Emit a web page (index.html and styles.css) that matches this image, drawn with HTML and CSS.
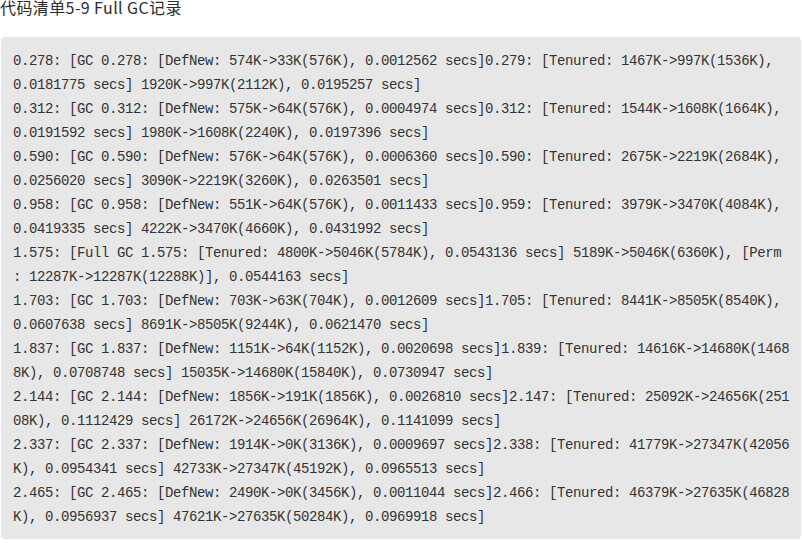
FILE: index.html
```html
<!DOCTYPE html>
<html lang="zh-CN">
<head>
<meta charset="utf-8">
<title>代码清单5-9 Full GC记录</title>
<link rel="stylesheet" href="styles.css">
</head>
<body>
<div class="listing">
<p class="listing-title">代码清单5-9 Full GC记录</p>
<pre class="code">0.278: [GC 0.278: [DefNew: 574K-&gt;33K(576K), 0.0012562 secs]0.279: [Tenured: 1467K-&gt;997K(1536K), 0.0181775 secs] 1920K-&gt;997K(2112K), 0.0195257 secs]
0.312: [GC 0.312: [DefNew: 575K-&gt;64K(576K), 0.0004974 secs]0.312: [Tenured: 1544K-&gt;1608K(1664K), 0.0191592 secs] 1980K-&gt;1608K(2240K), 0.0197396 secs]
0.590: [GC 0.590: [DefNew: 576K-&gt;64K(576K), 0.0006360 secs]0.590: [Tenured: 2675K-&gt;2219K(2684K), 0.0256020 secs] 3090K-&gt;2219K(3260K), 0.0263501 secs]
0.958: [GC 0.958: [DefNew: 551K-&gt;64K(576K), 0.0011433 secs]0.959: [Tenured: 3979K-&gt;3470K(4084K), 0.0419335 secs] 4222K-&gt;3470K(4660K), 0.0431992 secs]
1.575: [Full GC 1.575: [Tenured: 4800K-&gt;5046K(5784K), 0.0543136 secs] 5189K-&gt;5046K(6360K), [Perm : 12287K-&gt;12287K(12288K)], 0.0544163 secs]
1.703: [GC 1.703: [DefNew: 703K-&gt;63K(704K), 0.0012609 secs]1.705: [Tenured: 8441K-&gt;8505K(8540K), 0.0607638 secs] 8691K-&gt;8505K(9244K), 0.0621470 secs]
1.837: [GC 1.837: [DefNew: 1151K-&gt;64K(1152K), 0.0020698 secs]1.839: [Tenured: 14616K-&gt;14680K(14688K), 0.0708748 secs] 15035K-&gt;14680K(15840K), 0.0730947 secs]
2.144: [GC 2.144: [DefNew: 1856K-&gt;191K(1856K), 0.0026810 secs]2.147: [Tenured: 25092K-&gt;24656K(25108K), 0.1112429 secs] 26172K-&gt;24656K(26964K), 0.1141099 secs]
2.337: [GC 2.337: [DefNew: 1914K-&gt;0K(3136K), 0.0009697 secs]2.338: [Tenured: 41779K-&gt;27347K(42056K), 0.0954341 secs] 42733K-&gt;27347K(45192K), 0.0965513 secs]
2.465: [GC 2.465: [DefNew: 2490K-&gt;0K(3456K), 0.0011044 secs]2.466: [Tenured: 46379K-&gt;27635K(46828K), 0.0956937 secs] 47621K-&gt;27635K(50284K), 0.0969918 secs]</pre>
</div>
</body>
</html>
```

FILE: styles.css
```css
html, body {
  margin: 0;
  padding: 0;
  background: #ffffff;
}

.listing {
  width: 801px;
}

.listing-title {
  margin: 0 0 23px 0;
  font-family: "Noto Sans CJK SC", "Noto Sans", sans-serif;
  font-size: 16px;
  letter-spacing: 0.4px;
  line-height: 14px;
  color: #2b2b2b;
  white-space: nowrap;
}

.code {
  margin: 0 0 0 1px;
  width: 800px;
  box-sizing: border-box;
  padding: 12px 8px 10px 12px;
  background: #e7e7e7;
  border-radius: 4px;
  font-family: "Liberation Mono", "DejaVu Sans Mono", monospace;
  font-size: 14px;
  letter-spacing: -0.4px;
  line-height: 24px;
  color: #333333;
  white-space: pre-wrap;
  word-break: break-all;
}
```
